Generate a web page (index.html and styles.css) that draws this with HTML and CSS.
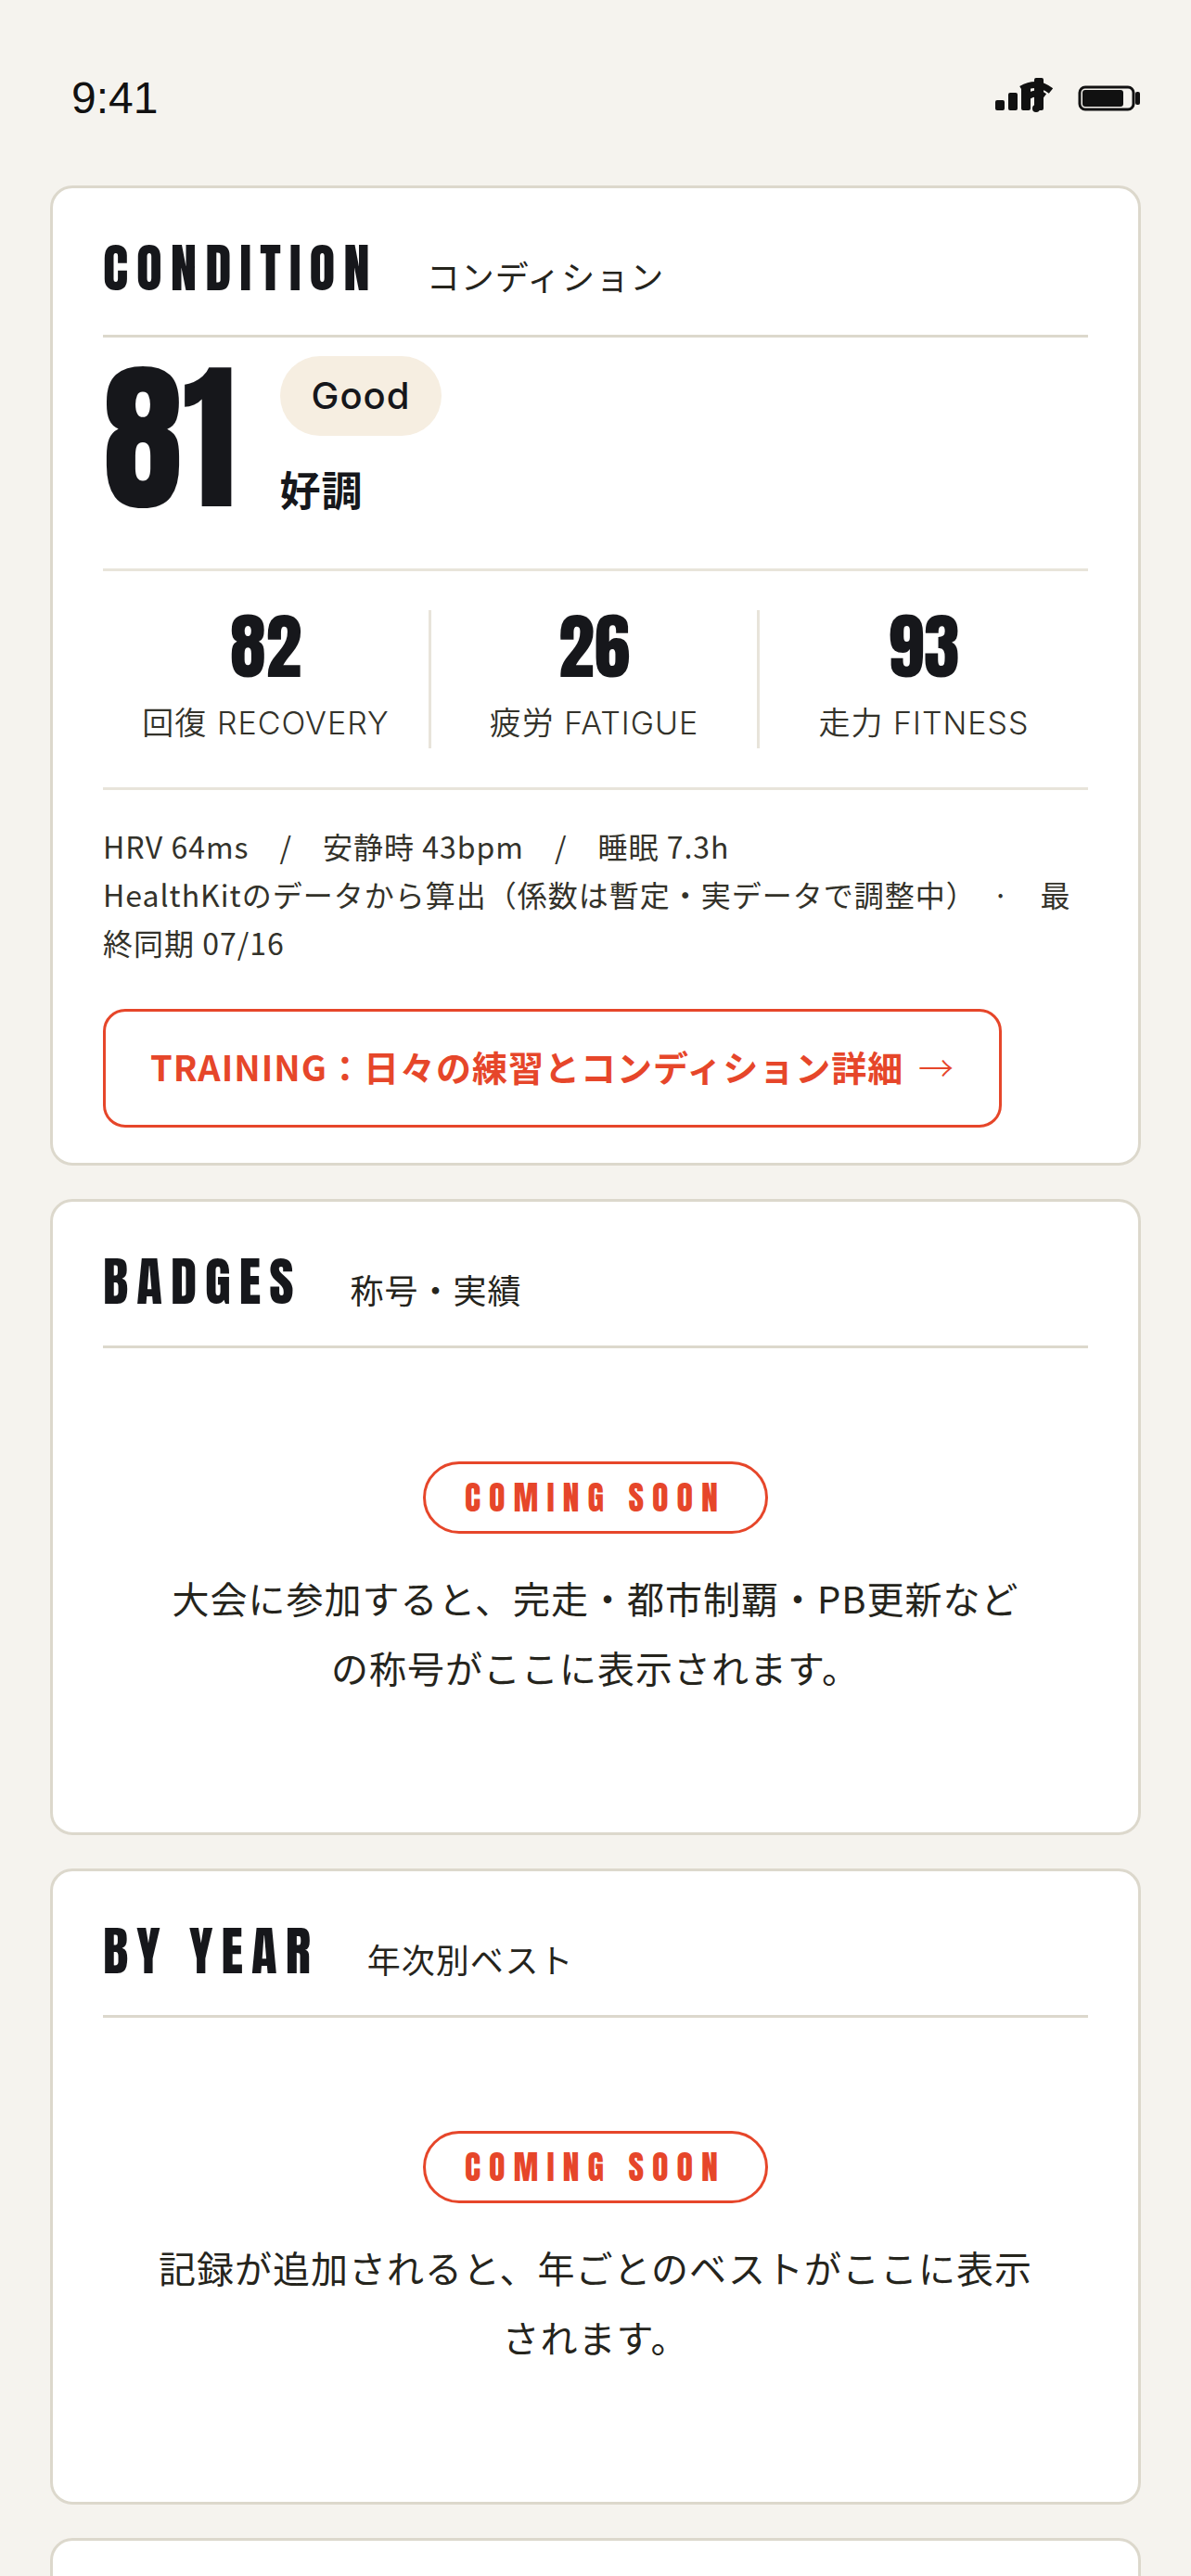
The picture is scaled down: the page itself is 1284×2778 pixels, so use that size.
FILE: index.html
```
<!DOCTYPE html>
<html lang="ja">

<head>
    <meta charset="UTF-8">
    <meta name="viewport" content="width=device-width, initial-scale=1.0">
    <title>コンディション</title>
    <link rel="stylesheet" href="styles.css">
</head>

<body>
    <header class="status-bar">
        <span class="time">9:41</span>
        <div class="status-icons">
            <svg class="signal" width="66" height="46" viewBox="0 0 66 46" aria-hidden="true">
                <rect x="1" y="25" width="10" height="11" rx="2" />
                <rect x="15" y="17" width="10" height="19" rx="2" />
                <rect x="29" y="10" width="10" height="26" rx="2" />
                <rect x="43" y="1" width="10" height="35" rx="2" />
                <path class="arc" d="M29 13Q46 3 61 15M36 21Q46 15 54 21" />
                <circle cx="45" cy="34" r="4" />
            </svg>
            <svg class="battery" width="68" height="28" viewBox="0 0 68 28" aria-hidden="true">
                <rect class="shell" x="2" y="2" width="58" height="24" rx="6" />
                <rect x="5" y="5" width="44" height="18" rx="3" />
                <rect x="62" y="7" width="5" height="14" rx="2" />
            </svg>
        </div>
    </header>

    <main class="cards">
        <section class="card">
            <div class="card-head card-head-main">
                <h2>CONDITION</h2>
                <span>コンディション</span>
            </div>

            <div class="score">
                <strong class="score-num">81</strong>
                <div class="score-state">
                    <span class="pill">Good</span>
                    <span class="state-ja">好調</span>
                </div>
            </div>

            <ul class="stats">
                <li>
                    <strong>82</strong>
                    <span>回復 RECOVERY</span>
                </li>
                <li>
                    <strong>26</strong>
                    <span>疲労 FATIGUE</span>
                </li>
                <li>
                    <strong>93</strong>
                    <span>走力 FITNESS</span>
                </li>
            </ul>

            <div class="detail">
                <p>HRV 64ms　/　安静時 43bpm　/　睡眠 7.3h</p>
                <p>HealthKitのデータから算出（係数は暫定・実データで調整中）　·　最終同期 07/16</p>
            </div>

            <a class="more" href="#training">TRAINING：日々の練習とコンディション詳細 <span class="arrow">→</span></a>
        </section>

        <section class="card">
            <div class="card-head">
                <h2>BADGES</h2>
                <span>称号・実績</span>
            </div>
            <div class="empty">
                <span class="soon">COMING SOON</span>
                <p>大会に参加すると、完走・都市制覇・PB更新などの称号がここに表示されます。</p>
            </div>
        </section>

        <section class="card">
            <div class="card-head">
                <h2>BY YEAR</h2>
                <span>年次別ベスト</span>
            </div>
            <div class="empty">
                <span class="soon">COMING SOON</span>
                <p>記録が追加されると、年ごとのベストがここに表示されます。</p>
            </div>
        </section>

        <section class="card next-card"></section>
    </main>
</body>

</html>
```

FILE: styles.css
```
* {
    box-sizing: border-box;
    margin: 0;
    padding: 0;
}

html {
    background-color: #f5f3ee;
}

body {
    height: 100vh;
    overflow: hidden;
    color: #25241c;
    font-family: "Noto Sans CJK JP", sans-serif;
}

.status-bar {
    display: flex;
    justify-content: space-between;
    align-items: center;
    height: 200px;
    padding: 12px 54px 0 77px;
}

.time {
    font-family: "Liberation Sans", sans-serif;
    font-size: 48px;
    line-height: 56px;
    color: #111;
}

.status-icons {
    display: flex;
    align-items: center;
    gap: 24px;
    fill: #111;
}

.arc,
.shell {
    fill: none;
    stroke: #111;
}

.arc {
    stroke-width: 7px;
}

.shell {
    stroke-width: 3px;
}

.cards {
    display: flex;
    flex-direction: column;
    gap: 36px;
    padding: 0 54px;
}

.card {
    padding: 0 54px;
    border: 3px solid #dcd8cc;
    border-radius: 24px;
    background-color: #fff;
}

.card-head {
    display: flex;
    align-items: baseline;
    gap: 52px;
    height: 158px;
    padding-top: 44px;
    border-bottom: 3px solid #dcd8cc;
}

.card-head-main {
    height: 161px;
}

.card-head h2,
.score-num,
.stats strong,
.soon {
    font-family: Anton, "Liberation Sans Narrow", "Liberation Sans", sans-serif;
    font-weight: normal;
    color: #16171b;
}

.card-head h2 {
    font-size: 57px;
    line-height: 84px;
    letter-spacing: 9px;
}

.card-head span {
    font-size: 36px;
    line-height: 54px;
    letter-spacing: 1px;
}

.score {
    display: flex;
    align-items: center;
    gap: 47px;
    padding: 20px 0 53px;
}

.score-num {
    font-size: 174px;
    line-height: 174px;
}

.score-state {
    display: flex;
    flex-direction: column;
    align-items: flex-start;
    gap: 24px;
    color: #16171b;
}

.pill {
    padding: 13px 34px;
    border-radius: 44px;
    background-color: #f6eee1;
    font-family: Inter, "Noto Sans CJK JP", sans-serif;
    font-size: 40px;
    font-weight: 500;
    line-height: 60px;
    letter-spacing: 1px;
}

.state-ja {
    font-size: 44px;
    font-weight: bold;
    line-height: 66px;
    letter-spacing: 1px;
}

.stats {
    display: grid;
    grid-template-columns: repeat(3, 1fr);
    padding: 42px 0;
    border-top: 3px solid #e8e4da;
    border-bottom: 3px solid #e8e4da;
    list-style: none;
}

.stats li {
    display: flex;
    flex-direction: column;
    align-items: center;
    gap: 17px;
    border-right: 3px solid #e8e4da;
}

.stats li:last-child {
    border-right: none;
}

.stats strong {
    font-size: 78px;
    line-height: 78px;
}

.stats span {
    font-family: Inter, "Noto Sans CJK JP", sans-serif;
    font-size: 34px;
    font-weight: 350;
    line-height: 54px;
    letter-spacing: 1px;
    color: #33322a;
}

.detail {
    padding-top: 34px;
    font-size: 32px;
    line-height: 52px;
    letter-spacing: 1px;
    color: #33322a;
}

.more {
    display: inline-block;
    margin: 46px 0 38px;
    padding: 29px 48px 33px;
    border: 3px solid #e6462a;
    border-radius: 24px;
    color: #e6462a;
    font-size: 38px;
    font-weight: bold;
    line-height: 60px;
    letter-spacing: 1px;
    text-decoration: none;
    vertical-align: top;
}

.arrow {
    margin-left: 6px;
    font-weight: 300;
}

.empty {
    display: flex;
    flex-direction: column;
    align-items: center;
    gap: 32px;
    padding: 122px 57px 140px;
    text-align: center;
}

.soon {
    padding: 12px 42px;
    border: 3px solid #e6462a;
    border-radius: 40px;
    color: #e6462a;
    font-size: 36px;
    line-height: 48px;
    letter-spacing: 9px;
}

.empty p {
    font-size: 40px;
    line-height: 75px;
    letter-spacing: 1px;
}

.next-card {
    height: 300px;
}
```
